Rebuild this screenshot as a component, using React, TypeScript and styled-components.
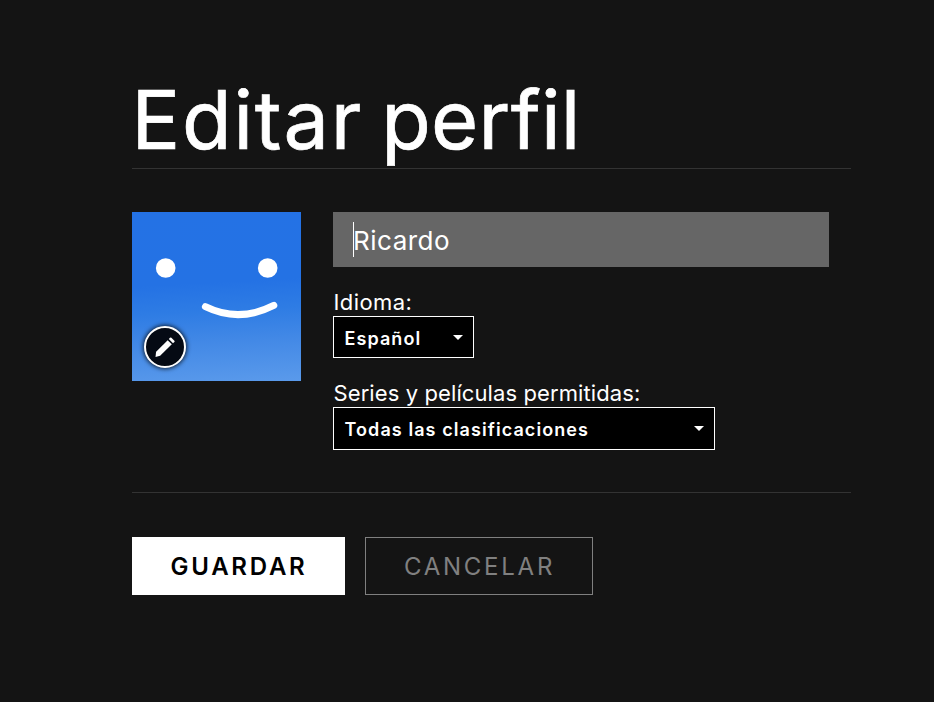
import React from "react";
import styled, { createGlobalStyle } from "styled-components";

const GlobalStyle = createGlobalStyle`
  *, *::before, *::after { box-sizing: border-box; }
  body {
    margin: 0;
    background: #141414;
    color: #fff;
    font-family: Inter, "Liberation Sans", sans-serif;
    -webkit-font-smoothing: antialiased;
    overflow: hidden;
  }
`;

const Page = styled.main`
  width: 719px;
  min-height: 702px;
  margin-left: 132px;
  padding-top: 71px;
`;

const Title = styled.h1`
  margin: 0;
  height: 98px;
  border-bottom: 1px solid #333;
  font-size: 81px;
  font-weight: 400;
  line-height: 99px;
  letter-spacing: 0.3px;
  word-spacing: -5px;
  text-indent: -0.5px;
  white-space: nowrap;
  font-feature-settings: "liga" 0, "calt" 0;
  -webkit-text-stroke: 0.7px #fff;
`;

const LooseWord = styled.span`
  letter-spacing: 1.8px;
`;

const Content = styled.section`
  display: flex;
  gap: 32px;
  height: 324px;
  padding-top: 43px;
  border-bottom: 1px solid #333;
`;

const Avatar = styled.div`
  position: relative;
  width: 169px;
  height: 169px;
  flex: none;
  background: linear-gradient(177deg, #2472e5 0%, #2472e4 42%, #2e7ce4 58%, #4389e6 76%, #5a9aeb 100%);
`;

const Face = styled.svg`
  display: block;
  width: 169px;
  height: 169px;
`;

const EditBadge = styled.button`
  position: absolute;
  left: 12px;
  top: 114px;
  width: 42px;
  height: 42px;
  padding: 0;
  display: grid;
  place-items: center;
  border: 2px solid #fff;
  border-radius: 50%;
  background: #050a14;
  box-shadow: 0 0 4px 1px rgba(0, 0, 0, 0.75);
`;

const Fields = styled.div`
  display: flex;
  flex-direction: column;
  align-items: flex-start;
`;

const NameField = styled.div`
  display: flex;
  align-items: center;
  width: 496px;
  height: 55px;
  padding: 0 20px;
  background: #666;
`;

const Caret = styled.span`
  width: 1px;
  height: 35px;
  margin-right: -1px;
  background: #fff;
`;

const NameText = styled.span`
  font-size: 26px;
  line-height: 35px;
  padding-top: 2px;
  letter-spacing: 0.5px;
`;

const Label = styled.label<{ $gap: number; $spacing: number }>`
  height: 27px;
  margin-top: ${(p) => p.$gap}px;
  padding-left: 0.5px;
  font-size: 22px;
  line-height: 26px;
  letter-spacing: ${(p) => p.$spacing}px;
  white-space: nowrap;
`;

const Dropdown = styled.button<{ $width: number; $height: number }>`
  display: flex;
  align-items: center;
  justify-content: space-between;
  width: ${(p) => p.$width}px;
  height: ${(p) => p.$height}px;
  padding: 3px 10px 0 10.5px;
  border: 1px solid #fff;
  background: #000;
  color: #fff;
  font: 600 18px/24px Inter, "Liberation Sans", sans-serif;
  letter-spacing: 1.08px;
  white-space: nowrap;
`;

const Arrow = styled.span`
  width: 0;
  height: 0;
  margin-top: -3px;
  border: 5px solid transparent;
  border-top-color: #fff;
  border-bottom: 0;
`;

const Actions = styled.footer`
  display: flex;
  gap: 20px;
  padding-top: 44px;
`;

const ActionButton = styled.button<{ $primary?: boolean }>`
  width: ${(p) => (p.$primary ? 213 : 228)}px;
  height: 58px;
  padding: 1px 0 0 1px;
  border: 1px solid ${(p) => (p.$primary ? "#fff" : "#808080")};
  background: ${(p) => (p.$primary ? "#fff" : "transparent")};
  color: ${(p) => (p.$primary ? "#000" : "#808080")};
  font: ${(p) => (p.$primary ? 600 : 400)} 24px/30px Inter, "Liberation Sans", sans-serif;
  letter-spacing: 2.75px;
  white-space: nowrap;
`;

export default function App() {
  return (
    <>
      <GlobalStyle />
      <Page>
        <Title>
          <LooseWord>Editar</LooseWord> perfil
        </Title>
        <Content>
          <Avatar>
            <Face viewBox="0 0 169 169" aria-hidden="true">
              <circle cx="33.7" cy="56" r="9.8" fill="#fff" />
              <circle cx="135.7" cy="56" r="9.8" fill="#fff" />
              <path
                d="M73.4 94.7Q107 111.2 141.8 93.4"
                fill="none"
                stroke="#fff"
                strokeWidth="7"
                strokeLinecap="round"
              />
            </Face>
            <EditBadge aria-label="Editar">
              <svg width="22" height="22" viewBox="0 0 22 22" fill="#fff">
                <path d="M13.7 4.2 17.8 8.3 6.1 19.7 1.5 20.9 2.1 15.7Z" />
                <path d="M14.8 3.1 16 1.8Q16.7 1.2 17.4 1.8L20.4 4.8Q21 5.5 20.4 6.1L19 7.3Z" />
              </svg>
            </EditBadge>
          </Avatar>
          <Fields>
            <NameField>
              <Caret />
              <NameText>Ricardo</NameText>
            </NameField>
            <Label $gap={22} $spacing={0.4}>Idioma:</Label>
            <Dropdown $width={141} $height={42}>
              Español
              <Arrow />
            </Dropdown>
            <Label $gap={22} $spacing={0.1}>Series y películas permitidas:</Label>
            <Dropdown $width={382} $height={43}>
              Todas las clasificaciones
              <Arrow />
            </Dropdown>
          </Fields>
        </Content>
        <Actions>
          <ActionButton $primary>GUARDAR</ActionButton>
          <ActionButton>CANCELAR</ActionButton>
        </Actions>
      </Page>
    </>
  );
}
